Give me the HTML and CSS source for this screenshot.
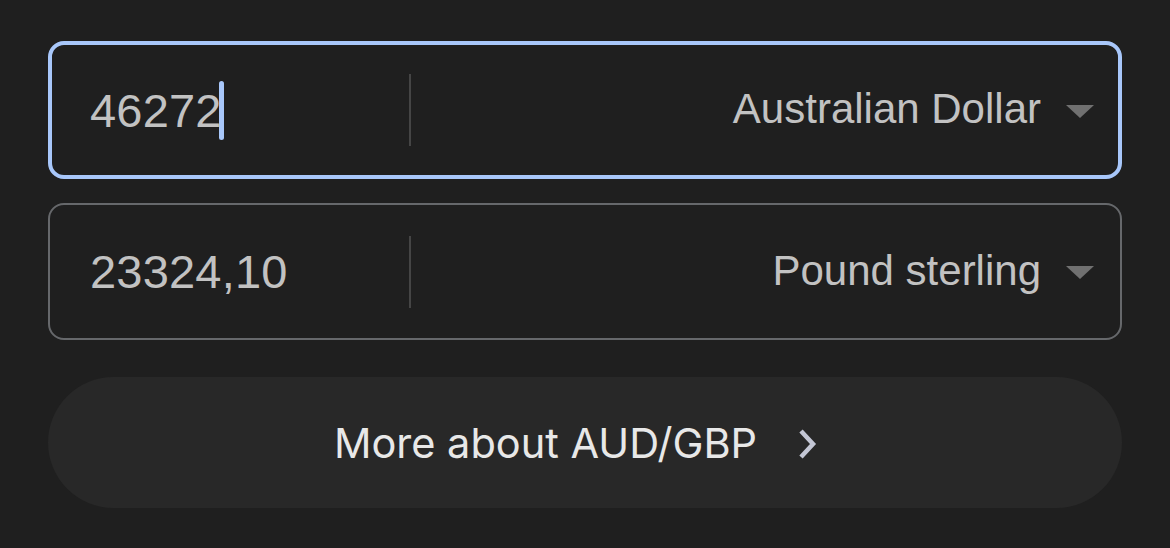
FILE: index.html
```html
<!DOCTYPE html>
<html lang="en">
<head>
    <meta charset="UTF-8">
    <meta name="viewport" content="width=device-width, initial-scale=1.0">
    <title>Currency converter</title>
    <link rel="stylesheet" href="styles.css">
</head>
<body>
    <div class="converter">
        <!-- Betrag in der Ausgangswaehrung (aktiv) -->
        <div class="field field-active">
            <div class="amount">46272<span class="caret"></span></div>
            <div class="divider"></div>
            <div class="currency">
                <span class="currency-name">Australian Dollar</span>
                <span class="arrow"></span>
            </div>
        </div>

        <!-- Umgerechneter Betrag -->
        <div class="field">
            <div class="amount">23324,10</div>
            <div class="divider"></div>
            <div class="currency">
                <span class="currency-name">Pound sterling</span>
                <span class="arrow"></span>
            </div>
        </div>

        <button type="button" class="more-button">
            More about AUD/GBP
            <svg class="chevron" width="22" height="32" viewBox="0 0 22 32">
                <path d="M5 3 L17 16 L5 29" fill="none" stroke="#c4c7d5" stroke-width="4.5" stroke-linecap="butt"/>
            </svg>
        </button>
    </div>
</body>
</html>
```

FILE: styles.css
```css
/* Seite */
body {
    margin: 0;
    background-color: #1f1f1f;
    font-family: "Liberation Sans", Arial, sans-serif;
}

.converter {
    display: flex;
    flex-direction: column;
    padding: 41px 48px 0 48px;
}

/* Eingabefelder */
.field {
    display: flex;
    align-items: center;
    box-sizing: border-box;
    height: 137px;
    border: 2px solid #66686b;
    border-radius: 16px;
    padding: 0 26px 0 40px;
    margin-bottom: 37px;
}

.field-active {
    height: 138px;
    border: 4px solid #a8c7fa;
    padding: 0 24px 0 38px;
    margin-bottom: 24px;
}

.amount {
    display: flex;
    align-items: center;
    width: 319px;
    font-size: 47px;
    color: #c2c2c2;
    letter-spacing: 0.2px;
}

.caret {
    display: inline-block;
    width: 5px;
    height: 59px;
    margin-left: -3px;
    border-radius: 3px;
    background-color: #a8c7fa;
}

.divider {
    width: 2px;
    height: 72px;
    background-color: #454545;
}

.currency {
    flex: 1;
    display: flex;
    align-items: center;
    justify-content: flex-end;
    font-size: 42px;
    color: #c2c2c2;
}

.currency-name {
    margin-top: -2px;
}

.arrow {
    width: 0;
    height: 0;
    margin-left: 25px;
    margin-top: 2px;
    border-left: 14px solid transparent;
    border-right: 14px solid transparent;
    border-top: 13px solid #707070;
}

/* Button unten */
.more-button {
    display: flex;
    align-items: center;
    justify-content: center;
    gap: 39px;
    height: 131px;
    border: none;
    border-radius: 66px;
    background-color: #282828;
    color: #e8e8e8;
    font-family: Inter, "Noto Sans", sans-serif;
    font-size: 41.5px;
    font-weight: 400;
    padding: 0 18px 0 0;
}

.chevron {
    display: block;
    margin-top: 2px;
}
```
